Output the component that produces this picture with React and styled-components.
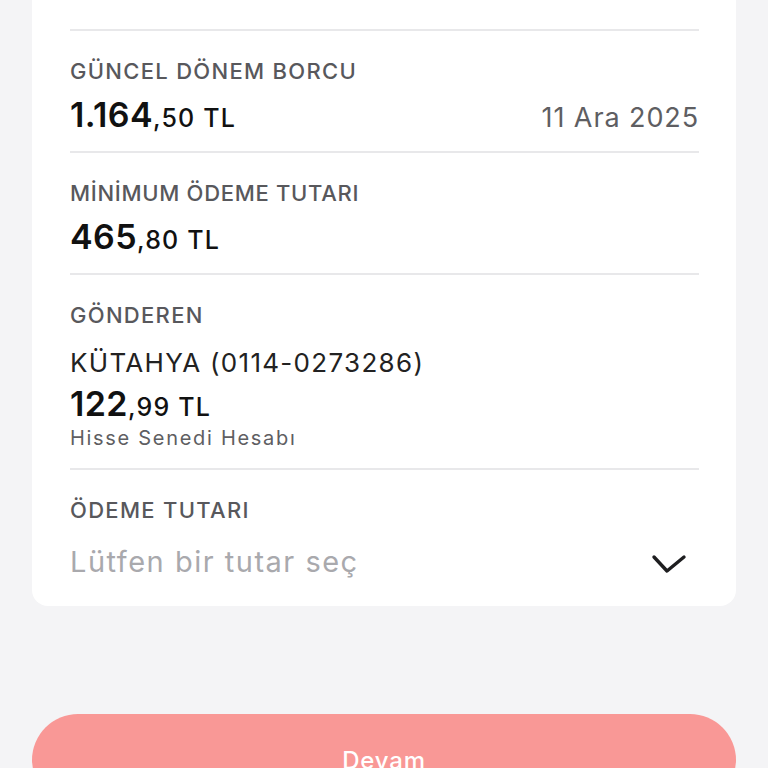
import React from "react";
import styled, { createGlobalStyle } from "styled-components";

const GlobalStyle = createGlobalStyle`
  html, body {
    margin: 0;
    padding: 0;
    background: #f4f4f6;
    font-family: Inter, "Noto Sans", sans-serif;
  }
`;

const Page = styled.div`
  display: flex;
  flex-direction: column;
  padding: 0 32px;
  min-height: 100vh;
`;

const Card = styled.div`
  background: #fff;
  border-radius: 0 0 16px 16px;
  padding: 0 37px 0 38px;
  display: flex;
  flex-direction: column;
`;

const TopStub = styled.div`
  height: 29px;
  border-bottom: 2px solid #e8e8ea;
`;

const Section = styled.div`
  display: flex;
  flex-direction: column;
  padding: ${(p) => (p.last ? "26px 0 27px" : "26px 0 18px")};
  border-bottom: ${(p) => (p.last ? "none" : "2px solid #e8e8ea")};
`;

const Label = styled.div`
  font-size: 22px;
  line-height: 28px;
  font-weight: 500;
  color: #58585c;
  letter-spacing: ${(p) => p.ls || 1.3}px;
`;

const AmountRow = styled.div`
  display: flex;
  justify-content: space-between;
  align-items: baseline;
  margin-top: ${(p) => p.gap || 12}px;
  height: ${(p) => p.h || 36}px;
  line-height: ${(p) => p.h || 36}px;
`;

const Amount = styled.div`
  color: #111;
  font-weight: 600;
  font-size: 34px;
  letter-spacing: 0.4px;
`;

const Cents = styled.span`
  font-size: 25px;
  font-weight: 500;
  letter-spacing: 1.2px;
`;

const DateText = styled.div`
  font-size: 27px;
  color: #5e5e62;
  letter-spacing: 0.9px;
`;

const Account = styled.div`
  margin-top: 18px;
  font-size: 26px;
  line-height: 32px;
  color: #222;
  letter-spacing: 1.3px;
`;

const SubText = styled.div`
  margin-top: 5px;
  font-size: 20px;
  line-height: 24px;
  color: #5e5e62;
  letter-spacing: 1.7px;
`;

const SelectRow = styled.div`
  margin-top: 19px;
  height: 36px;
  display: flex;
  align-items: center;
  justify-content: space-between;
  padding-right: 12px;
`;

const Placeholder = styled.div`
  font-size: 29px;
  color: #a9a9ad;
  letter-spacing: 1.5px;
`;

const ChevronBox = styled.div`
  display: flex;
  padding-top: 6px;
`;

const Spacer = styled.div`
  height: 108px;
`;

const Button = styled.button`
  height: 92px;
  border: none;
  border-radius: 46px;
  background: #f99896;
  color: #fff;
  font-family: Inter, "Noto Sans", sans-serif;
  font-size: 24px;
  font-weight: 500;
  letter-spacing: 0.8px;
  cursor: pointer;
`;

const Chevron = () => (
  <ChevronBox>
    <svg width="36" height="20" viewBox="0 0 36 20" fill="none">
      <path d="M3 3 L16 17 L33 3" stroke="#1e1e20" strokeWidth="3.4" strokeLinecap="round" strokeLinejoin="round" />
    </svg>
  </ChevronBox>
);

const Money = ({ whole, cents }) => (
  <Amount>
    {whole}
    <Cents>,{cents} TL</Cents>
  </Amount>
);

export default function App() {
  return (
    <>
      <GlobalStyle />
      <Page>
        <Card>
          <TopStub />
          <Section>
            <Label>GÜNCEL DÖNEM BORCU</Label>
            <AmountRow>
              <Money whole="1.164" cents="50" />
              <DateText>11 Ara 2025</DateText>
            </AmountRow>
          </Section>
          <Section>
            <Label ls={0.7}>MİNİMUM ÖDEME TUTARI</Label>
            <AmountRow>
              <Money whole="465" cents="80" />
            </AmountRow>
          </Section>
          <Section>
            <Label>GÖNDEREN</Label>
            <Account>KÜTAHYA (0114-0273286)</Account>
            <AmountRow gap={8} h={34}>
              <Money whole="122" cents="99" />
            </AmountRow>
            <SubText>Hisse Senedi Hesabı</SubText>
          </Section>
          <Section last>
            <Label>ÖDEME TUTARI</Label>
            <SelectRow>
              <Placeholder>Lütfen bir tutar seç</Placeholder>
              <Chevron />
            </SelectRow>
          </Section>
        </Card>
        <Spacer />
        <Button>Devam</Button>
      </Page>
    </>
  );
}
